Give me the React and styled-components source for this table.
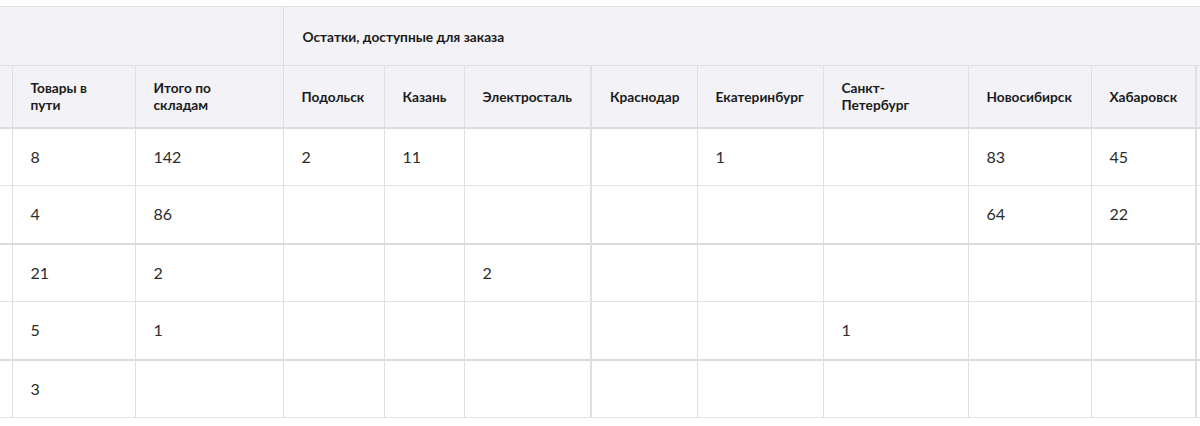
import React from 'react'
import styled, { createGlobalStyle } from 'styled-components'

/* -----------------------------------------------------DATA------------------------------------------------ */

const columns = [
  { key: 'edge', width: 12 },
  { key: 'transit', width: 123, title: 'Товары в пути' },
  { key: 'total', width: 148, title: 'Итого по складам' },
  { key: 'podolsk', width: 101, title: 'Подольск' },
  { key: 'kazan', width: 80, title: 'Казань' },
  { key: 'elektrostal', width: 127, title: 'Электросталь' },
  { key: 'krasnodar', width: 106, title: 'Краснодар', thick: true },
  { key: 'ekb', width: 126, title: 'Екатеринбург' },
  { key: 'spb', width: 145, title: 'Санкт-Петербург' },
  { key: 'nsk', width: 123, title: 'Новосибирск' },
  { key: 'khv', width: 105, title: 'Хабаровск' },
  { key: 'next', width: 120, title: '', thick: true },
]

const rows = [
  { values: ['', 8, 142, 2, 11, '', '', 1, '', 83, 45, ''] },
  { values: ['', 4, 86, '', '', '', '', '', '', 64, 22, ''], groupEnd: true },
  { values: ['', 21, 2, '', '', 2, '', '', '', '', '', ''] },
  { values: ['', 5, 1, '', '', '', '', '', 1, '', '', ''], groupEnd: true },
  { values: ['', 3, '', '', '', '', '', '', '', '', '', ''] },
]

const tableWidth = columns.reduce((sum, c) => sum + c.width, 0)

/* -----------------------------------------------------COMPONENT------------------------------------------------ */

export default function App() {
  return (
    <>
      <GlobalStyle />
      <Viewport>
        <Table style={{ width: tableWidth }}>
          <colgroup>
            {columns.map((c) => (
              <col key={c.key} style={{ width: c.width }} />
            ))}
          </colgroup>
          <thead>
            <GroupRow>
              <GroupCell colSpan={3} />
              <GroupCell colSpan={columns.length - 3}>
                Остатки, доступные для заказа
              </GroupCell>
            </GroupRow>
            <TitleRow>
              {columns.map((c) => (
                <TitleCell key={c.key} $thick={c.thick}>
                  {c.title}
                </TitleCell>
              ))}
            </TitleRow>
          </thead>
          <tbody>
            {rows.map((row, i) => (
              <DataRow key={i} $groupEnd={row.groupEnd}>
                {row.values.map((v, j) => (
                  <DataCell key={columns[j].key} $thick={columns[j].thick}>
                    {v}
                  </DataCell>
                ))}
              </DataRow>
            ))}
          </tbody>
        </Table>
      </Viewport>
    </>
  )
}

/* -----------------------------------------------------STYLE------------------------------------------------ */

const GlobalStyle = createGlobalStyle`
  body {
    margin: 0;
    background: #ffffff;
    font-family: Lato, 'Noto Sans', sans-serif;
    color: #1f1f1f;
  }
`

const Viewport = styled.div`
  width: 1200px;
  height: 426px;
  overflow: hidden;
  padding-top: 6px;
  box-sizing: border-box;
`

const Table = styled.table`
  table-layout: fixed;
  border-collapse: collapse;
  border-top: 1px solid #e0e0e3;
`

const GroupRow = styled.tr`
  height: 59px;
  background: #f3f3f7;
`

const GroupCell = styled.th`
  padding: 0 19px;
  text-align: left;
  vertical-align: middle;
  font-size: 13.7px;
  font-weight: 700;
  line-height: 17px;
  color: #1a1a1a;
  border-left: 1px solid #e0e0e3;
  border-bottom: 1px solid #e0e0e3;

  &:first-child {
    border-left: none;
  }
`

const TitleRow = styled.tr`
  height: 62px;
  background: #f3f3f7;
  border-bottom: 2px solid #dcdcde;
`

const TitleCell = styled.th`
  padding: 0 18px;
  text-align: left;
  vertical-align: middle;
  font-size: 13.7px;
  font-weight: 700;
  line-height: 17px;
  color: #1a1a1a;
  border-left: ${(p) => (p.$thick ? '2px' : '1px')} solid #e0e0e3;
  overflow: hidden;

  &:first-child {
    border-left: none;
  }
`

const DataRow = styled.tr`
  height: 58px;
  border-bottom: ${(p) => (p.$groupEnd ? '2px solid #dcdcde' : '1px solid #e3e3e5')};
`

const DataCell = styled.td`
  padding: 0 18px;
  vertical-align: middle;
  font-size: 16px;
  line-height: 20px;
  color: #2b2b2b;
  border-left: ${(p) => (p.$thick ? '2px' : '1px')} solid #e0e0e3;

  &:first-child {
    border-left: none;
  }
`
